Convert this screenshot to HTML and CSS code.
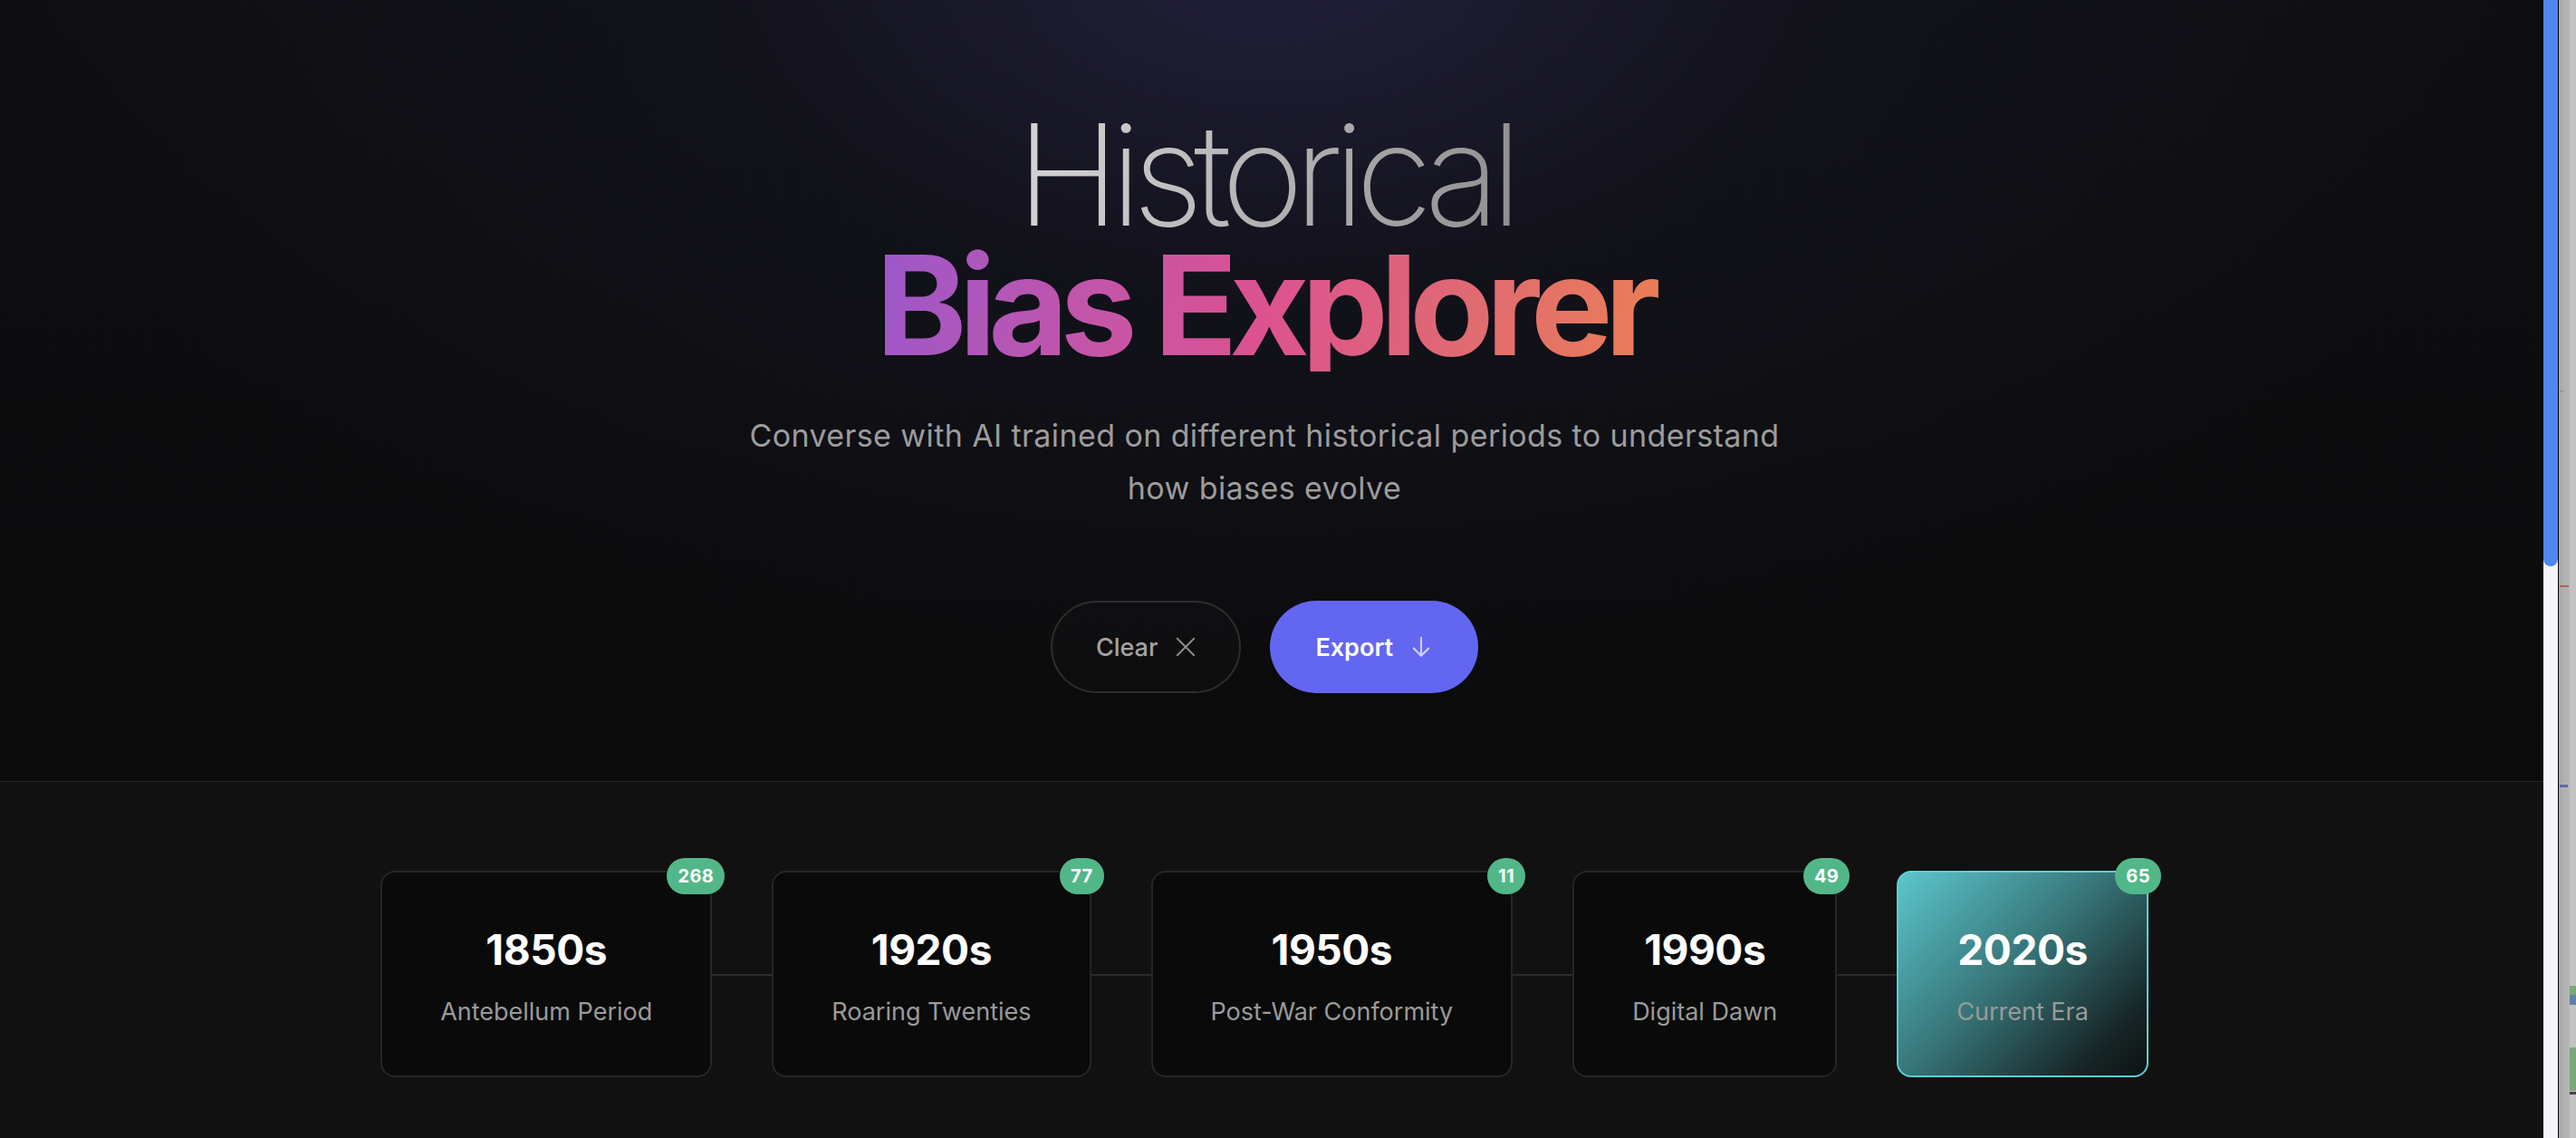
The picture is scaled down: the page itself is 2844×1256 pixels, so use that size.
FILE: index.html
```html
<!DOCTYPE html>
<html lang="en">
<head>
<meta charset="utf-8">
<title>Historical Bias Explorer</title>
<link rel="stylesheet" href="styles.css">
</head>
<body>
<div class="window">
  <div class="page">
    <header class="hero">
      <h1 class="title">
        <span class="title-light">Historical</span>
        <span class="title-bold">Bias Explorer</span>
      </h1>
      <p class="subtitle">Converse with AI trained on different historical periods to understand<br>how biases evolve</p>
      <div class="actions">
        <button class="btn btn-clear">Clear
          <svg class="icon" viewBox="0 0 24 24" fill="none" stroke="currentColor" stroke-width="1.8" stroke-linecap="round"><path d="M3.5 3.5L20.5 20.5M20.5 3.5L3.5 20.5"/></svg>
        </button>
        <button class="btn btn-export">Export
          <svg class="icon icon-arrow" viewBox="0 0 24 24" fill="none" stroke="currentColor" stroke-width="2" stroke-linecap="round" stroke-linejoin="round"><path d="M12 2.5V21M4.5 13.5L12 21L19.5 13.5"/></svg>
        </button>
      </div>
    </header>
    <section class="timeline">
      <div class="track">
        <div class="era"><span class="badge">268</span><div class="year">1850s</div><div class="label">Antebellum Period</div></div>
        <div class="era"><span class="badge">77</span><div class="year">1920s</div><div class="label">Roaring Twenties</div></div>
        <div class="era"><span class="badge">11</span><div class="year">1950s</div><div class="label">Post-War Conformity</div></div>
        <div class="era"><span class="badge">49</span><div class="year">1990s</div><div class="label">Digital Dawn</div></div>
        <div class="era era-active"><span class="badge">65</span><div class="year">2020s</div><div class="label">Current Era</div></div>
      </div>
    </section>
  </div>
  <div class="scrollbar"><div class="thumb"></div></div>
  <div class="divider"></div>
  <div class="edge">
    <div class="edge-marks">
      <span class="mark mark-green"></span>
      <span class="mark mark-red"></span>
      <span class="mark mark-blue"></span>
    </div>
    <div class="edge-side">
      <span class="blk blk-green"></span>
      <span class="blk blk-blue"></span>
      <span class="blk blk-green2"></span>
      <span class="blk blk-dark"></span>
    </div>
  </div>
</div>
</body>
</html>
```

FILE: styles.css
```css
* { box-sizing: border-box; }
html, body { margin: 0; padding: 0; height: 100%; overflow: hidden; }
body {
  font-family: Inter, "Noto Sans", "Liberation Sans", sans-serif;
  background: #111111;
  color: #ffffff;
}
.window {
  display: flex;
  height: 1256px;
  width: 2844px;
}
.page {
  flex: 1;
  min-width: 0;
  display: flex;
  flex-direction: column;
  background: #111111;
  padding-right: 16px;
}
.hero {
  height: 863px;
  border-bottom: 1px solid #262626;
  margin-right: -16px;
  padding-right: 16px;
  display: flex;
  flex-direction: column;
  align-items: center;
  padding-top: 120px;
  background:
    radial-gradient(ellipse 1400px 820px at 50% -5%, rgba(40, 38, 72, 0.75) 0%, rgba(22, 22, 36, 0.5) 45%, rgba(10, 10, 12, 0) 100%),
    linear-gradient(180deg, #0e0e12 0%, #0b0b0c 100%);
}
.title {
  margin: 0;
  display: flex;
  flex-direction: column;
  align-items: center;
  line-height: 145px;
}
.title-light {
  display: block;
  height: 145px;
  font-size: 155px;
  font-weight: 200;
  letter-spacing: -0.067em;
  background: linear-gradient(100deg, #d6d6d6 0%, #b0b0b0 55%, #8e8e8e 100%);
  -webkit-background-clip: text;
  background-clip: text;
  color: transparent;
  padding: 0 0.05em;
}
.title-bold {
  display: block;
  height: 145px;
  font-size: 152px;
  font-weight: 700;
  letter-spacing: -0.058em;
  background: linear-gradient(100deg, #9a58cc 0%, #c555a8 30%, #dc5290 50%, #e06a72 75%, #eb7f55 100%);
  -webkit-background-clip: text;
  background-clip: text;
  color: transparent;
  padding: 0 0.05em;
}
.subtitle {
  margin: 42px 0 0;
  text-align: center;
  font-size: 34px;
  line-height: 58px;
  letter-spacing: 0.012em;
  color: #9c9c9c;
  font-weight: 400;
}
.actions {
  margin-top: 95px;
  display: flex;
  gap: 32px;
}
.btn {
  height: 102px;
  border-radius: 51px;
  padding: 0 50px;
  display: flex;
  align-items: center;
  gap: 18px;
  font-family: inherit;
  font-size: 27px;
  cursor: pointer;
}
.btn .icon { width: 26px; height: 26px; flex: none; }
.btn-clear {
  padding: 0 46px 0 48px;
  background: rgba(255, 255, 255, 0.01);
  border: 2px solid #2e2e2e;
  color: #a3a3a3;
  font-weight: 500;
}
.btn-clear .icon { color: #8c8c8c; }
.btn-export {
  background: #6366f1;
  border: none;
  color: #ffffff;
  font-weight: 600;
}
.btn-export .icon { color: rgba(255, 255, 255, 0.7); }
.timeline {
  padding-top: 98px;
  display: flex;
  justify-content: center;
}
.track {
  position: relative;
  display: flex;
  gap: 66px;
}
.track::before {
  content: "";
  position: absolute;
  left: 0;
  right: 0;
  top: 114px;
  height: 2px;
  background: #2b2b2b;
}
.era {
  position: relative;
  z-index: 1;
  height: 228px;
  padding: 58px 64px 0;
  border: 2px solid #262626;
  border-radius: 16px;
  background: #0a0a0a;
  display: flex;
  flex-direction: column;
  align-items: center;
}
.year {
  font-size: 46px;
  line-height: 55px;
  font-weight: 700;
  color: #ffffff;
  letter-spacing: -0.01em;
}
.label {
  margin-top: 25px;
  font-size: 27px;
  line-height: 32px;
  color: #9a9a9a;
  white-space: nowrap;
}
.badge {
  position: absolute;
  top: -16px;
  right: -16px;
  height: 40px;
  min-width: 42px;
  padding: 0 12px;
  border-radius: 20px;
  background: #52b788;
  color: #ffffff;
  font-size: 20px;
  font-weight: 700;
  line-height: 40px;
  text-align: center;
  letter-spacing: 0.02em;
}
.era-active {
  border-color: #5ccfd6;
  background: linear-gradient(135deg, rgba(94, 206, 212, 0.96) 0%, rgba(60, 130, 134, 0.9) 45%, rgba(22, 36, 38, 0.95) 85%, rgba(14, 18, 19, 0.98) 100%);
}
.scrollbar {
  width: 16px;
  flex: none;
  background: #f4f6f9;
}
.thumb {
  height: 625px;
  background: #5087ef;
  border-radius: 0 0 8px 8px;
}
.divider {
  width: 1px;
  flex: none;
  background: #000000;
}
.edge {
  width: 19px;
  flex: none;
  display: flex;
  background: #b3b3b3;
}
.edge-marks {
  width: 12px;
  position: relative;
  background: linear-gradient(90deg, #a9a9a9, #b6b6b6);
}
.mark {
  position: absolute;
  left: 1px;
  height: 2px;
}
.mark-green { top: 431px; width: 4px; background: #8ea08e; }
.mark-red { top: 646px; width: 10px; background: #b06060; }
.mark-blue { top: 866px; width: 9px; height: 3px; background: #5a6aa8; }
.edge-side {
  flex: 1;
  position: relative;
  background: #c2c2c2;
}
.blk { position: absolute; left: 0; right: 0; }
.blk-green { top: 1088px; height: 10px; background: #7ba878; }
.blk-blue { top: 1098px; height: 11px; background: #5c82a8; }
.blk-green2 { top: 1156px; height: 48px; background: #7ba878; }
.blk-dark { top: 1205px; height: 3px; background: #444444; }
```
